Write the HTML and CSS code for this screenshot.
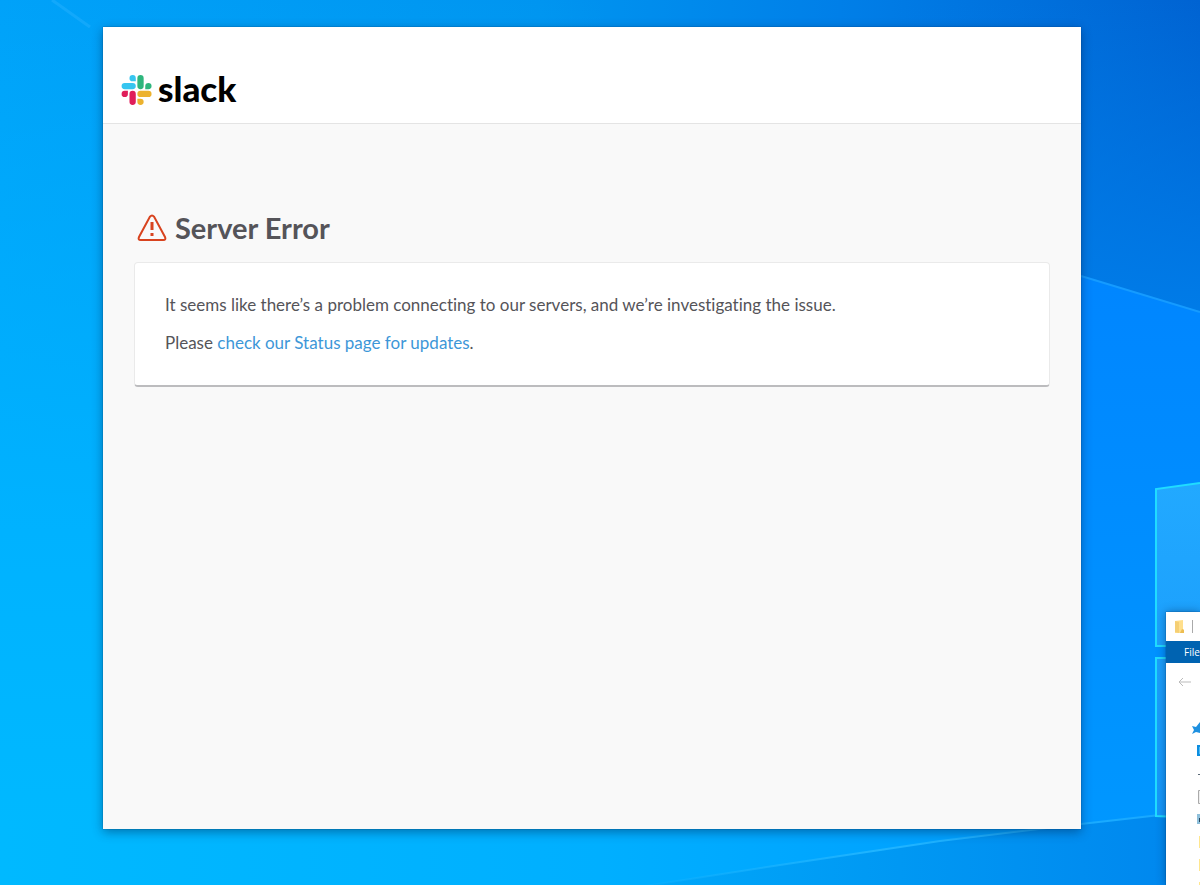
FILE: index.html
```html
<!DOCTYPE html>
<html lang="en">
<head>
<meta charset="utf-8">
<meta name="viewport" content="width=device-width, initial-scale=1">
<title>Slack – Server Error</title>
<link rel="stylesheet" href="styles.css">
</head>
<body class="desktop">
<svg class="wallpaper" viewBox="0 0 1200 885" preserveAspectRatio="none" aria-hidden="true">
  <defs>
    <linearGradient id="top" x1="0" y1="0" x2="1" y2="0">
      <stop offset="0" stop-color="#00a2f9"/><stop offset="0.45" stop-color="#0095f0"/><stop offset="0.7" stop-color="#007fe8"/><stop offset="1" stop-color="#0063d2"/>
    </linearGradient>
    <linearGradient id="right" gradientUnits="userSpaceOnUse" x1="1080" y1="0" x2="1080" y2="320">
      <stop offset="0" stop-color="#007ce8" stop-opacity="0"/><stop offset="1" stop-color="#007ce8"/>
    </linearGradient>
    <linearGradient id="left" x1="0" y1="0" x2="0" y2="1">
      <stop offset="0" stop-color="#00b4ff" stop-opacity="0"/><stop offset="0.6" stop-color="#00b2ff"/><stop offset="1" stop-color="#00baff"/>
    </linearGradient>
    <linearGradient id="beam" x1="0" y1="0" x2="0" y2="1">
      <stop offset="0" stop-color="#0084ff"/><stop offset="1" stop-color="#0097ff"/>
    </linearGradient>
    <linearGradient id="glow" gradientUnits="userSpaceOnUse" x1="0" y1="0" x2="1200" y2="0">
      <stop offset="0" stop-color="#00b9ff"/><stop offset="0.5" stop-color="#00afff"/><stop offset="1" stop-color="#0097ff"/>
    </linearGradient>
    <linearGradient id="floor" x1="0" y1="0" x2="1" y2="0">
      <stop offset="0" stop-color="#00aafb"/><stop offset="0.5" stop-color="#0098f3"/><stop offset="1" stop-color="#0086ee"/>
    </linearGradient>
    <linearGradient id="ray" gradientUnits="userSpaceOnUse" x1="600" y1="0" x2="1160" y2="0">
      <stop offset="0" stop-color="#20b8ff" stop-opacity="0"/><stop offset="0.5" stop-color="#20b4ff"/><stop offset="1" stop-color="#18a8ff"/>
    </linearGradient>
    <linearGradient id="pane" x1="0" y1="0" x2="0" y2="1">
      <stop offset="0" stop-color="#22a9ff"/><stop offset="1" stop-color="#1597fb"/>
    </linearGradient>
  </defs>
  <rect width="1200" height="885" fill="url(#top)"/>
  <rect x="900" width="300" height="320" fill="url(#right)"/>
  <rect width="600" height="885" fill="url(#left)"/>
  <path d="M52 0L90 27" stroke="#2cb4ff" stroke-opacity="0.4" stroke-width="3"/>
  <path d="M900 220L1081 276L1200 312V830H900Z" fill="url(#beam)"/>
  <path d="M1081 276L1200 312" stroke="#159bff" stroke-width="2"/>
  <rect y="820" width="1081" height="65" fill="url(#glow)"/>
  <path d="M600 893L780 865L940 841L1081 824L1160 815H1200V893Z" fill="url(#floor)"/>
  <path d="M600 893L780 865L940 841L1081 824L1160 815" fill="none" stroke="url(#ray)" stroke-width="2"/>
  <path d="M1155 489L1200 483V647H1155ZM1155 658H1200V818L1155 816Z" fill="url(#pane)"/>
  <path d="M1200 483L1156 489V646H1200M1200 658H1156V816L1200 818" fill="none" stroke="#20dcff" stroke-width="2"/>
</svg>
<main class="window">
  <header class="topbar">
    <a class="brand" href="#" aria-label="Slack">
      <svg class="mark" viewBox="0 0 124 124" aria-hidden="true">
        <path fill="#e01e5a" d="M26.400 78.200a13 13 0 1 1-13-13h13zM33 78.200a13 13 0 0 1 26 0v32.500a13 13 0 0 1-26 0z"/>
        <path fill="#36c5f0" d="M46 26a13 13 0 1 1 13-13v13zM46 32.600a13 13 0 0 1 0 26H13.400a13 13 0 0 1 0-26z"/>
        <path fill="#2eb67d" d="M98.200 45.600a13 13 0 1 1 13 13h-13zM91.600 45.600a13 13 0 0 1-26 0V13a13 13 0 0 1 26 0z"/>
        <path fill="#ecb22e" d="M78.600 97.700a13 13 0 1 1-13 13v-13zM78.600 91.200a13 13 0 0 1 0-26h32.600a13 13 0 0 1 0 26z"/>
      </svg>
      <span class="wordmark">slack</span>
    </a>
  </header>
  <section class="content">
    <h1 class="title">
      <svg class="warning" viewBox="0 0 30 28" aria-hidden="true">
        <path d="M13 2.600Q15 .200 17 2.600L28 23Q29.300 26 26.300 26H3.700Q.700 26 2 23Z"/>
        <path d="M15 8v8M15 19v3" class="bang"/>
      </svg>
      <span>Server Error</span>
    </h1>
    <div class="card">
      <p>It seems like there’s a problem connecting to our servers, and we’re investigating the issue.</p>
      <p>Please <a href="#">check our Status page for updates</a>.</p>
    </div>
  </section>
</main>
<aside class="explorer" aria-label="File Explorer">
  <div class="explorer-title">
    <svg class="folder" viewBox="0 0 10 13" aria-hidden="true"><path fill="#ffdf8c" d="M0 1l8-1v9l1 1v3H0z"/><path fill="#f5cf74" d="M0 1l4 1v11l-4-1z"/><path fill="#edbd51" d="M7 9l2 1v3H5z"/></svg>
    <span class="divider"></span>
  </div>
  <button class="file-tab" type="button">File</button>
  <div class="explorer-nav">
    <svg class="back" viewBox="0 0 13 10" aria-hidden="true"><path d="M13 5H1M5 1L1 5l4 4"/></svg>
  </div>
  <svg class="tree" viewBox="0 0 10 170" aria-hidden="true">
    <path fill="#1e90e0" d="M2 14l2-4-2-4 4 1 4-5v11l-4-1z"/>
    <path fill="#0d8ee0" d="M7 25h3v11H7z"/><path fill="#51bcf5" d="M9 27h1v7H9z"/>
    <path fill="#596876" d="M8 54h2v1H8z"/>
    <path fill="#eee" stroke="#aaa" d="M8.500 70.500H12v13H8.500z"/>
    <path fill="#8fc0db" d="M7 94h3v10H7z"/><path fill="#29475c" d="M9 98h1v4H9z"/>
    <path fill="#ffe68e" d="M9 116h1v12H9zM9 139h1v12H9zM9 162h1v8H9z"/>
  </svg>
</aside>
</body>
</html>
```
FILE: styles.css
```css
* { box-sizing: border-box; }

.desktop {
  margin: 0;
  min-height: 100vh;
  padding: 27px 119px 56px 103px;
  display: flex;
  overflow: hidden;
  color: #555459;
  font-family: Lato, "Open Sans", sans-serif;
  font-variant-ligatures: none;
}

.wallpaper {
  position: absolute;
  inset: 0;
  width: 100%;
  height: 100%;
}

.window {
  position: relative;
  flex: 1;
  background: #f9f9f9;
  box-shadow: 0 0 1px rgba(0, 40, 80, 0.7), 0 3px 10px rgba(0, 30, 70, 0.45);
}

.topbar {
  padding: 46px 18px 16px;
  background: #fff;
  border-bottom: 1px solid #e4e4e4;
}

.brand {
  display: flex;
  align-items: center;
  gap: 6px;
  color: #000;
  text-decoration: none;
}

.mark { width: 31px; height: 30px; }

.wordmark {
  padding-bottom: 4px;
  font-size: 35px;
  font-weight: 900;
  line-height: 30px;
}

.content { padding: 84px 31px 31px; }

.title {
  display: flex;
  align-items: center;
  gap: 8px;
  margin: 0 0 14px;
  padding-left: 3px;
  font-size: 29px;
  font-weight: 700;
  line-height: 40px;
}

.warning {
  width: 30px;
  height: 28px;
  fill: none;
  stroke: #d8431f;
  stroke-width: 2;
}

.bang { stroke-width: 3; }

.card {
  padding: 28px 30px 29px;
  background: #fff;
  border: 1px solid #eaeaea;
  border-bottom: 2px solid #bcbcbe;
  border-radius: 4px;
  font-size: 17px;
  line-height: 27px;
}

.card p { margin: 0 0 11px; }
.card p:last-child { margin: 0; }
.card a { color: #3d97d8; text-decoration: none; }

.explorer {
  position: absolute;
  top: 612px;
  right: 0;
  bottom: 0;
  width: 34px;
  overflow: hidden;
  background: #fff;
  box-shadow: 0 0 1px #003c78, 0 0 9px rgba(0, 30, 70, 0.45);
}

.explorer-title {
  display: flex;
  align-items: center;
  gap: 7px;
  height: 29px;
  padding-left: 9px;
}

.folder { width: 10px; height: 13px; }
.divider { width: 1px; height: 13px; background: #aaa; }

.file-tab {
  display: block;
  width: 100%;
  height: 22px;
  padding: 0 0 0 18px;
  border: 0;
  background: #0063b1;
  color: #fff;
  font-family: "Open Sans", sans-serif;
  font-size: 10px;
  line-height: 22px;
  text-align: left;
}

.explorer-nav { padding: 14px 0 0 12px; height: 57px; }

.back {
  display: block;
  width: 13px;
  height: 10px;
  fill: none;
  stroke: #bbb;
  stroke-width: 1;
}

.tree { display: block; width: 10px; height: 170px; margin-left: auto; }
```
